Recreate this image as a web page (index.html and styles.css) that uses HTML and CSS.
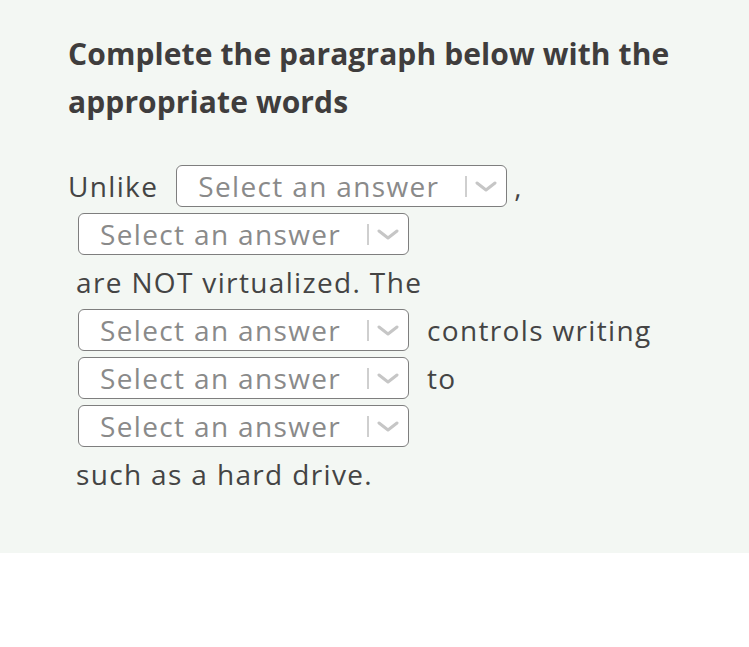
FILE: index.html
```html
<!DOCTYPE html>
<html lang="en">
<head>
<meta charset="utf-8">
<title>Complete the paragraph</title>
<link rel="stylesheet" href="styles.css">
</head>
<body>
<section class="panel">
  <h1 class="title">Complete the paragraph below with the appropriate words</h1>
  <div class="para">
    <span class="word first">Unlike</span>
    <div class="select"><span class="placeholder">Select an answer</span><span class="sep"></span><svg class="chev" viewBox="0 0 22 11" width="22" height="11"><path d="M2 2 L11 9 L20 2"/></svg></div>
    <span class="comma">,</span>
    <div class="select"><span class="placeholder">Select an answer</span><span class="sep"></span><svg class="chev" viewBox="0 0 22 11" width="22" height="11"><path d="M2 2 L11 9 L20 2"/></svg></div>
    <span class="word">are NOT virtualized. The</span>
    <div class="select"><span class="placeholder">Select an answer</span><span class="sep"></span><svg class="chev" viewBox="0 0 22 11" width="22" height="11"><path d="M2 2 L11 9 L20 2"/></svg></div>
    <span class="word">controls writing</span>
    <div class="select"><span class="placeholder">Select an answer</span><span class="sep"></span><svg class="chev" viewBox="0 0 22 11" width="22" height="11"><path d="M2 2 L11 9 L20 2"/></svg></div>
    <span class="word">to</span>
    <div class="select"><span class="placeholder">Select an answer</span><span class="sep"></span><svg class="chev" viewBox="0 0 22 11" width="22" height="11"><path d="M2 2 L11 9 L20 2"/></svg></div>
    <span class="word">such as a hard drive.</span>
  </div>
</section>
</body>
</html>
```
FILE: styles.css
```css
* { box-sizing: border-box; }
html, body { margin: 0; padding: 0; background: #ffffff; }
body { font-family: "Open Sans", "Noto Sans", sans-serif; }
.panel {
  background: #f3f7f3;
  height: 553px;
  padding: 30px 68px 0 68px;
}
.title {
  margin: 0;
  font-size: 30px;
  line-height: 48px;
  font-weight: 700;
  letter-spacing: 0.1px;
  color: #3f3d3d;
}
.para {
  margin-top: 36px;
  display: flex;
  flex-wrap: wrap;
  align-items: center;
  font-size: 28px;
  letter-spacing: 1.35px;
  color: #444444;
}
.word {
  line-height: 48px;
  margin-left: 8px;
  white-space: nowrap;
}
.word.first { margin-left: 0; margin-right: 8px; }
.comma { line-height: 48px; margin-left: -3px; }
.select {
  width: 331px;
  height: 42px;
  margin: 3px 10px;
  background: #ffffff;
  border: 1.5px solid #7e7e7e;
  border-radius: 6px;
  display: flex;
  align-items: center;
  padding: 0 9px 0 21px;
}
.placeholder {
  flex: 1;
  color: #8a8a8a;
  white-space: nowrap;
}
.sep {
  width: 2px;
  height: 21px;
  background: #cfcfcf;
  margin-right: 8px;
}
.chev { display: block; }
.chev path {
  fill: none;
  stroke: #c6c6c6;
  stroke-width: 3;
  stroke-linecap: round;
  stroke-linejoin: round;
}
```
